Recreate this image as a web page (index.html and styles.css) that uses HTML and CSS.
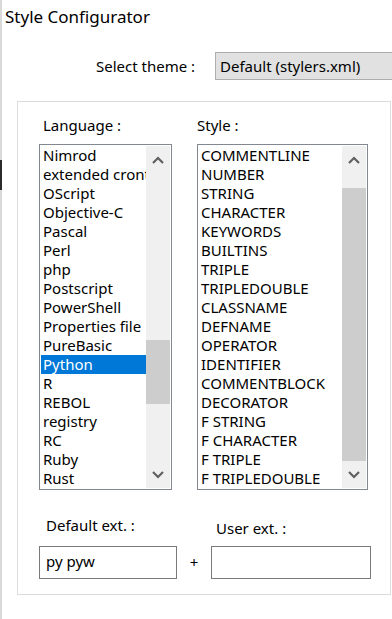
FILE: index.html
```html
<!DOCTYPE html>
<html lang="en">
<head>
  <meta charset="UTF-8" />
  <meta name="viewport" content="width=device-width, initial-scale=1.0" />
  <title>Style Configurator</title>
  <link rel="stylesheet" href="styles.css">
</head>
<body>
  <div class="dialog">
    <h1 class="title">Style Configurator</h1>

    <div class="theme-row">
      <label class="theme-label">Select theme :</label>
      <div class="theme-select">Default (stylers.xml)</div>
    </div>

    <div class="group">
      <div class="lists">
        <div class="list-col">
          <div class="list-label">Language :</div>
          <div class="listbox lang-box">
            <ul class="items">
              <li>Nimrod</li>
              <li>extended crontab</li>
              <li>OScript</li>
              <li>Objective-C</li>
              <li>Pascal</li>
              <li>Perl</li>
              <li>php</li>
              <li>Postscript</li>
              <li>PowerShell</li>
              <li>Properties file</li>
              <li>PureBasic</li>
              <li class="selected">Python</li>
              <li>R</li>
              <li>REBOL</li>
              <li>registry</li>
              <li>RC</li>
              <li>Ruby</li>
              <li>Rust</li>
            </ul>
            <div class="scrollbar">
              <div class="sb-btn"><svg width="12" height="8" viewBox="0 0 12 8"><polyline points="1,7 6,2 11,7" /></svg></div>
              <div class="sb-track"><div class="sb-thumb" style="margin-top: 167px; height: 64px;"></div></div>
              <div class="sb-btn"><svg width="12" height="8" viewBox="0 0 12 8"><polyline points="1,1 6,6 11,1" /></svg></div>
            </div>
          </div>
        </div>

        <div class="list-col">
          <div class="list-label">Style :</div>
          <div class="listbox style-box">
            <ul class="items">
              <li>COMMENTLINE</li>
              <li>NUMBER</li>
              <li>STRING</li>
              <li>CHARACTER</li>
              <li>KEYWORDS</li>
              <li>BUILTINS</li>
              <li>TRIPLE</li>
              <li>TRIPLEDOUBLE</li>
              <li>CLASSNAME</li>
              <li>DEFNAME</li>
              <li>OPERATOR</li>
              <li>IDENTIFIER</li>
              <li>COMMENTBLOCK</li>
              <li>DECORATOR</li>
              <li>F STRING</li>
              <li>F CHARACTER</li>
              <li>F TRIPLE</li>
              <li>F TRIPLEDOUBLE</li>
            </ul>
            <div class="scrollbar">
              <div class="sb-btn"><svg width="12" height="8" viewBox="0 0 12 8"><polyline points="1,7 6,2 11,7" /></svg></div>
              <div class="sb-track"><div class="sb-thumb" style="margin-top: 15px; height: 273px;"></div></div>
              <div class="sb-btn"><svg width="12" height="8" viewBox="0 0 12 8"><polyline points="1,1 6,6 11,1" /></svg></div>
            </div>
          </div>
        </div>
      </div>

      <div class="ext-row">
        <div class="ext-col default-ext">
          <div class="ext-label">Default ext. :</div>
          <div class="ext-input">py pyw</div>
        </div>
        <span class="plus">+</span>
        <div class="ext-col user-ext">
          <div class="ext-label">User ext. :</div>
          <div class="ext-input"></div>
        </div>
      </div>
    </div>
  </div>
</body>
</html>
```

FILE: styles.css
```css
* {
  margin: 0;
  padding: 0;
  box-sizing: border-box;
  font-family: 'Noto Sans', 'Liberation Sans', sans-serif;
}

body {
  background-color: #ffffff;
  color: #000000;
  overflow: hidden;
}

.dialog {
  position: relative;
  height: 619px;
  border-left: 2px solid #d9d9d9;
}

/* splitter fragment on the far left */
.dialog::before {
  content: '';
  position: absolute;
  left: -2px;
  top: 160px;
  width: 2px;
  height: 30px;
  background-color: #2b2b2b;
}

.title {
  font-size: 17px;
  font-weight: 400;
  line-height: 22px;
  padding: 6px 0 0 3px;
}

.theme-row {
  display: flex;
  align-items: center;
  margin-top: 24px;
  padding-left: 94px;
  font-size: 15px;
}

.theme-label {
  width: 119px;
}

.theme-select {
  flex: 1;
  height: 28px;
  margin-right: -20px;
  padding-left: 4px;
  line-height: 26px;
  background-color: #e1e1e1;
  border: 1px solid #adadad;
  white-space: nowrap;
}

.group {
  margin: 21px 0 0 15px;
  width: 374px;
  border: 1px solid #dcdcdc;
  padding: 14px 0 15px 21px;
  font-size: 15px;
}

.lists {
  display: flex;
  gap: 25px;
}

.list-label {
  line-height: 19px;
  padding-left: 4px;
  margin-bottom: 9px;
}

.list-col:last-child .list-label {
  padding-left: 0;
}

.listbox {
  display: flex;
  border: 1px solid #828790;
  padding: 1px;
  background: #ffffff;
}

.lang-box {
  width: 133px;
}

.style-box {
  width: 171px;
}

.items {
  list-style: none;
  flex: 1;
  overflow: hidden;
}

.items li {
  height: 19px;
  line-height: 19px;
  padding-left: 2px;
  white-space: nowrap;
  overflow: hidden;
}

.items li.selected {
  background-color: #0078d7;
  color: #ffffff;
}

.scrollbar {
  width: 24px;
  display: flex;
  flex-direction: column;
  background-color: #f0f0f0;
}

.sb-btn {
  height: 27px;
  display: flex;
  align-items: center;
  justify-content: center;
}

.sb-btn svg polyline {
  fill: none;
  stroke: #606060;
  stroke-width: 2.2;
}

.sb-track {
  flex: 1;
}

.sb-thumb {
  background-color: #cdcdcd;
}

.ext-row {
  display: flex;
  align-items: flex-end;
  margin-top: 26px;
}

.ext-label {
  line-height: 19px;
  padding-left: 7px;
  margin-bottom: 11px;
}

.user-ext .ext-label {
  padding-left: 5px;
  margin-bottom: 8px;
}

.ext-input {
  height: 33px;
  border: 1px solid #7a7a7a;
  padding-left: 6px;
  line-height: 28px;
}

.default-ext {
  width: 138px;
}

.user-ext {
  width: 160px;
}

.plus {
  width: 34px;
  text-align: center;
  line-height: 33px;
}
```
